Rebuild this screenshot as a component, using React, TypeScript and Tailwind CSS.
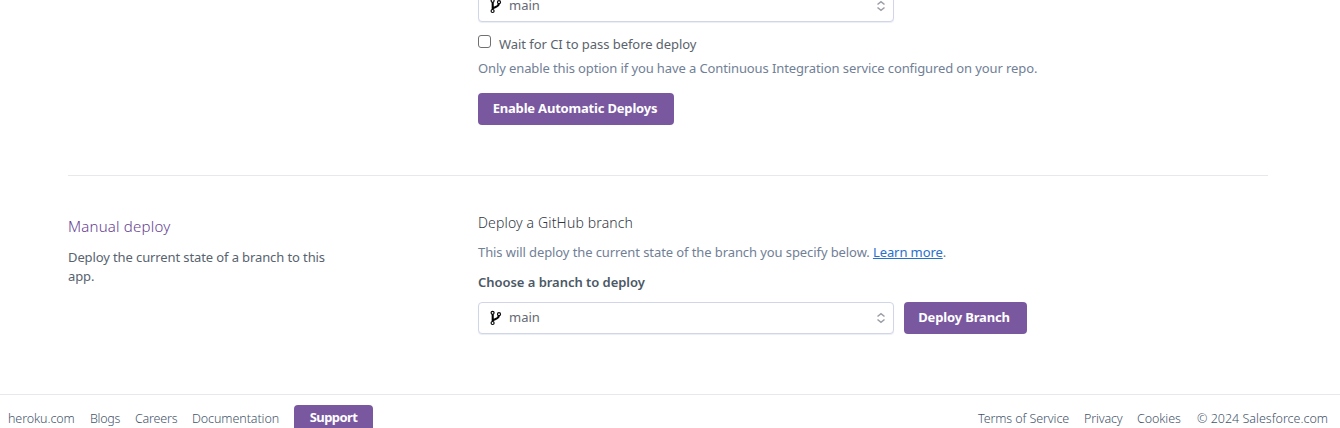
import React from "react";

function BranchIcon() {
  return (
    <svg width="12" height="16" viewBox="0 0 12 16" fill="none" stroke="#050505" className="shrink-0">
      <circle cx="2.6" cy="2.8" r="1.5" strokeWidth="1.2" />
      <circle cx="2.6" cy="13" r="1.5" strokeWidth="1.2" />
      <circle cx="9" cy="4.2" r="1.5" strokeWidth="1.2" />
      <path d="M2.7 4.2v7.4M2.8 10.6C3.6 8.8 8.6 9.6 8.8 5.8" strokeWidth="2.1" />
    </svg>
  );
}

function SortIcon() {
  return (
    <svg width="10" height="12" viewBox="0 0 10 12" fill="none" stroke="#9a9ea6" strokeWidth="1.5" className="shrink-0">
      <path d="M1.5 4.5L5 1.6l3.5 2.9M1.5 7.5L5 10.4l3.5-2.9" />
    </svg>
  );
}

function BranchSelect() {
  return (
    <div className="flex h-8 w-[416px] shrink-0 items-center rounded-[4px] border border-[#d0d5e8] bg-white pr-[7px] pl-[11px] shadow-[0_1px_1px_#eceef5]">
      <BranchIcon />
      <span className="ml-[7px] flex-1 pb-0.5 text-[13px] text-[#666a74]">main</span>
      <SortIcon />
    </div>
  );
}

const button =
  "flex items-center justify-center rounded-[4px] bg-[#79589f] pb-0.5 text-[13px] font-bold text-white";

export default function App() {
  return (
    <div className="flex h-[428px] w-[1340px] flex-col overflow-hidden bg-white font-['Noto_Sans',sans-serif] text-[13px] leading-[19px] whitespace-nowrap text-[#596981]">
      <section className="mr-[72px] ml-[68px] flex h-[176px] shrink-0 flex-col items-start border-b border-[#e8e8ec] pl-[410px]">
        <div className="-mt-[10px]">
          <BranchSelect />
        </div>
        <label className="mt-[13px] flex h-[19px] items-start">
          <input type="checkbox" className="h-[13px] w-[13px] appearance-none rounded-[3px] border border-[#707070] bg-white" />
          <span className="ml-2 tracking-[-0.05px] text-[#5a636c]">Wait for CI to pass before deploy</span>
        </label>
        <p className="mt-[5px] tracking-[-0.11px] text-[#718096]">
          Only enable this option if you have a Continuous Integration service configured on your repo.
        </p>
        <button className={`${button} mt-[15px] h-8 w-[196px] pr-0.5 tracking-[-0.19px]`}>Enable Automatic Deploys</button>
      </section>

      <section className="ml-[68px] flex h-[218px] shrink-0">
        <div className="w-[410px] pt-[39px]">
          <h2 className="text-[15px] leading-[22px] font-light tracking-[0.2px] text-[#653e91]">Manual deploy</h2>
          <p className="mt-[11px] w-[275px] tracking-[-0.11px] whitespace-normal text-[#57636f]">
            Deploy the current state of a branch to this app.
          </p>
        </div>
        <div className="pt-[37px]">
          <h3 className="text-[14px] leading-5 font-light tracking-[0.15px] text-[#32373f]">Deploy a GitHub branch</h3>
          <p className="mt-[10px] tracking-[-0.09px] text-[#718096]">
            This will deploy the current state of the branch you specify below.{" "}
            <a className="text-[#2a6fca] underline">Learn more</a>.
          </p>
          <p className="mt-[11px] tracking-[-0.04px] font-semibold text-[#4c5865]">Choose a branch to deploy</p>
          <div className="mt-[10px] flex gap-[10px]">
            <BranchSelect />
            <button className={`${button} h-8 w-[123px] pr-[3px] tracking-[-0.15px]`}>Deploy Branch</button>
          </div>
        </div>
      </section>

      <footer className="flex h-[34px] shrink-0 items-start border-t border-[#e8e8ec] pr-[13px] pl-2 text-[12.5px] font-light text-[#43546a]">
        <nav className="flex pt-[14px]">
          <a className="w-[82px] tracking-[-0.1px]">heroku.com</a>
          <a className="w-[45px] tracking-[-0.3px]">Blogs</a>
          <a className="w-[57px] tracking-[-0.2px]">Careers</a>
          <a className="w-[102px] tracking-[-0.08px]">Documentation</a>
        </nav>
        <button className={`${button} mt-[10px] h-[27px] w-[79px] shrink-0 tracking-[-0.6px]`}>Support</button>
        <nav className="ml-auto flex pt-[14px]">
          <a className="w-[106px] tracking-[-0.1px]">Terms of Service</a>
          <a className="w-[53px] tracking-[-0.15px]">Privacy</a>
          <a className="w-[60px] tracking-[-0.1px]">Cookies</a>
          <span className="w-[130px]">© 2024 Salesforce.com</span>
        </nav>
      </footer>
    </div>
  );
}
